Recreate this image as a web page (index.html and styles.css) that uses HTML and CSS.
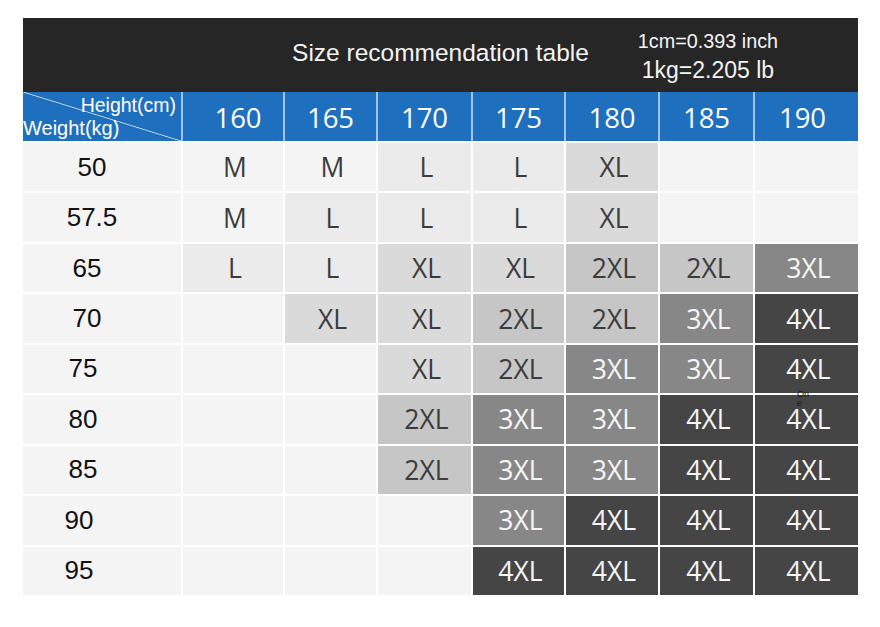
FILE: index.html
```html
<!DOCTYPE html>
<html lang="en">
<head>
<meta charset="utf-8">
<title>Size recommendation table</title>
<link rel="stylesheet" href="styles.css">
</head>
<body>
<div class="chart">
  <div class="title-bar">
    <div class="spacer"></div>
    <div class="title">Size recommendation table</div>
    <div class="units">
      <div class="u1">1cm=0.393 inch</div>
      <div class="u2">1kg=2.205 lb</div>
    </div>
  </div>
  <div class="head-row">
    <div class="corner"><span class="h">Height(cm)</span><span class="w">Weight(kg)</span></div>
    <div class="hc hc-first">160</div>
    <div class="hc">165</div>
    <div class="hc">170</div>
    <div class="hc">175</div>
    <div class="hc">180</div>
    <div class="hc">185</div>
    <div class="hc hc-last">190</div>
  </div>
  <div class="body">
    <div class="wt wt-a">50</div>
    <div class="c m">M</div><div class="c m">M</div><div class="c l">L</div><div class="c l">L</div><div class="c xl">XL</div><div class="c e"></div><div class="c e"></div>

    <div class="wt wt-a">57.5</div>
    <div class="c m">M</div><div class="c l">L</div><div class="c l">L</div><div class="c l">L</div><div class="c xl">XL</div><div class="c e"></div><div class="c e"></div>

    <div class="wt wt-b">65</div>
    <div class="c l">L</div><div class="c l">L</div><div class="c xl">XL</div><div class="c xl">XL</div><div class="c x2">2XL</div><div class="c x2">2XL</div><div class="c x3">3XL</div>

    <div class="wt wt-b">70</div>
    <div class="c e"></div><div class="c xl">XL</div><div class="c xl">XL</div><div class="c x2">2XL</div><div class="c x2">2XL</div><div class="c x3">3XL</div><div class="c x4">4XL</div>

    <div class="wt wt-c">75</div>
    <div class="c e"></div><div class="c e"></div><div class="c xl">XL</div><div class="c x2">2XL</div><div class="c x3">3XL</div><div class="c x3">3XL</div><div class="c x4">4XL</div>

    <div class="wt wt-c">80</div>
    <div class="c e"></div><div class="c e"></div><div class="c x2">2XL</div><div class="c x3">3XL</div><div class="c x3">3XL</div><div class="c x4">4XL</div><div class="c x4 note-cell">4XL<span class="note">On<br>e</span></div>

    <div class="wt wt-c">85</div>
    <div class="c e"></div><div class="c e"></div><div class="c x2">2XL</div><div class="c x3">3XL</div><div class="c x3">3XL</div><div class="c x4">4XL</div><div class="c x4">4XL</div>

    <div class="wt wt-d">90</div>
    <div class="c e"></div><div class="c e"></div><div class="c e"></div><div class="c x3">3XL</div><div class="c x4">4XL</div><div class="c x4">4XL</div><div class="c x4">4XL</div>

    <div class="wt wt-d">95</div>
    <div class="c e"></div><div class="c e"></div><div class="c e"></div><div class="c x4">4XL</div><div class="c x4">4XL</div><div class="c x4">4XL</div><div class="c x4">4XL</div>
  </div>
</div>
</body>
</html>
```
FILE: styles.css
```css
html, body {
  margin: 0;
  padding: 0;
  background: #ffffff;
}

body {
  font-family: "Liberation Sans", Arial, sans-serif;
}

.chart {
  width: 835px;
  margin: 18px 0 0 23px;
}

.title-bar {
  height: 74px;
  background: #262626;
  display: grid;
  grid-template-columns: 1fr auto 1fr;
  align-items: center;
  color: #f4f4f4;
}

.title {
  font-size: 24.5px;
  padding-bottom: 4px;
  white-space: nowrap;
}

.units {
  padding-left: 44px;
  width: 150px;
  text-align: center;
  white-space: nowrap;
}

.u1 {
  font-size: 19.8px;
  line-height: 24px;
  padding-bottom: 5px;
}

.u2 {
  font-size: 23px;
  line-height: 24px;
}

.head-row,
.body {
  display: grid;
  grid-template-columns: 158px 100px 91px 93px 91px 92px 93px 103px;
  column-gap: 2px;
}

.head-row {
  height: 49px;
  background: #9fc3ea;
  margin-bottom: 2px;
}

.corner {
  background:
    linear-gradient(to top right, transparent calc(50% - 0.8px), #d6e6f7 50%, transparent calc(50% + 0.8px)),
    #1f6fbf;
  color: #ffffff;
  display: flex;
  flex-direction: column;
  padding-top: 2px;
}

.corner .h {
  align-self: flex-end;
  font-size: 19.5px;
  line-height: 22px;
  padding-right: 5px;
}

.corner .w {
  align-self: flex-start;
  font-size: 20px;
  line-height: 24px;
}

.hc {
  background: #1f6fbf;
  color: #ffffff;
  font-family: "Open Sans", "Noto Sans", sans-serif;
  font-size: 27.5px;
  display: flex;
  align-items: center;
  justify-content: center;
  padding-top: 2px;
}

.hc-first {
  padding-left: 10px;
}

.hc-last {
  padding-right: 8px;
}

.body {
  height: 452px;
  grid-auto-rows: 1fr;
  row-gap: 2px;
  background: #ffffff;
}

.wt {
  background: #f4f4f4;
  color: #111111;
  font-size: 26px;
  display: flex;
  align-items: center;
  justify-content: center;
}

.wt-a { padding-right: 20px; }
.wt-b { padding-right: 30px; }
.wt-c { padding-right: 38px; }
.wt-d { padding-right: 46px; }

.c {
  display: flex;
  align-items: center;
  justify-content: center;
  font-family: "Open Sans", "Noto Sans", sans-serif;
  font-size: 26.5px;
  color: #3c3c3c;
  padding-left: 4px;
}

.e { background: #f4f4f4; }
.m { background: #f4f4f4; }
.l { background: #ebebeb; }
.xl { background: #dadada; }
.x2 { background: #c6c6c6; }
.x3 { background: #878787; color: #f6f6f6; }
.x4 { background: #454545; color: #f6f6f6; }

.note-cell {
  position: relative;
}

.note {
  position: absolute;
  top: -5px;
  left: 42px;
  font-family: "Liberation Sans", Arial, sans-serif;
  font-size: 9px;
  line-height: 9px;
  color: #1a1a1a;
}
```
